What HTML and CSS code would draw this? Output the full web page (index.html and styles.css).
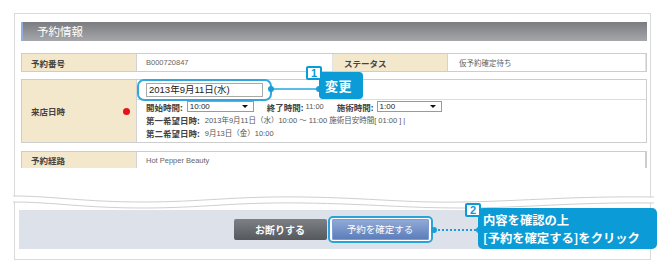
FILE: index.html
```html
<!DOCTYPE html>
<html lang="ja">
<head>
<meta charset="utf-8">
<title>予約情報</title>
<link rel="stylesheet" href="styles.css">
</head>
<body>
<div class="page">
  <div class="frame">
    <div class="hd">予約情報</div>

    <div class="row r1">
      <div class="lab">予約番号</div>
      <div class="val">B000720847</div>
      <div class="lab">ステータス</div>
      <div class="val">仮予約確定待ち</div>
    </div>

    <div class="row r2">
      <div class="lab lab-mid"><span>来店日時</span><span class="req"></span></div>
      <div class="val2">
        <div class="sub1"><div class="inp">2013年9月11日(水)</div></div>
        <div class="sub2">
          <div class="ln">
            <span class="k">開始時間:</span>
            <span class="sel sel-a">10:00<i class="arr"></i></span>
            <span class="k k-end">終了時間:</span><span class="v">11:00</span>
            <span class="k k-dur">施術時間:</span>
            <span class="sel sel-b">1:00<i class="arr"></i></span>
          </div>
          <div class="ln"><span class="k">第一希望日時:</span><span class="v v-gap">2013年9月11日（水）10:00 ～ 11:00 施術目安時間[ 01:00 ] |</span></div>
          <div class="ln"><span class="k">第二希望日時:</span><span class="v v-gap">9月13日（金）10:00</span></div>
        </div>
      </div>
    </div>

    <div class="row r3">
      <div class="lab">予約経路</div>
      <div class="val">Hot Pepper Beauty</div>
    </div>

    <svg class="wave" viewBox="0 0 641 16" preserveAspectRatio="none" aria-hidden="true">
      <path d="M0 2 C40 2 70 8 130 8 S220 2 290 3 S390 9 450 8 S560 2 641 3 L641 9 C560 8 510 14 450 14 S350 8 290 9 S190 14 130 14 S40 8 0 8 Z" fill="#fff"/>
      <path d="M0 2 C40 2 70 8 130 8 S220 2 290 3 S390 9 450 8 S560 2 641 3" fill="none" stroke="#cfcfcf" stroke-width="1"/>
      <path d="M0 8 C40 8 70 14 130 14 S220 8 290 9 S390 14 450 14 S560 8 641 9" fill="none" stroke="#cfcfcf" stroke-width="1"/>
    </svg>

    <div class="panel">
      <button class="btn btn-gray">お断りする</button>
      <span class="focus"><button class="btn btn-blue">予約を確定する</button></span>
    </div>
  </div>

  <!-- annotation 1 -->
  <div class="hl1"></div>
  <div class="link1"><i class="pt pt-l"></i><i class="pt pt-r"></i></div>
  <div class="tip1">変更</div>
  <div class="badge badge1">1</div>

  <!-- annotation 2 -->
  <div class="link2"><i class="pt pt-l"></i><i class="pt pt-r"></i></div>
  <div class="tip2"><span class="tl">内容を確認の上</span><span class="tl">[予約を確定する]をクリック</span></div>
  <div class="badge badge2">2</div>
</div>
</body>
</html>
```

FILE: styles.css
```css
* { box-sizing: border-box; }
html, body { margin: 0; padding: 0; background: #fff; }
body {
  font-family: "Noto Sans CJK JP", "Noto Sans", sans-serif;
  color: #333;
}
.page {
  position: relative;
  width: 670px;
  height: 270px;
  overflow: hidden;
  padding: 13px 0 0 14px;
}
.frame {
  width: 637px;
  height: 247px;
  border: 1px solid #d9d9d9;
  padding: 8px 3px 0 6px;
  display: flex;
  flex-direction: column;
}
.hd {
  height: 19px;
  background: linear-gradient(#7a7c80, #a5a7aa);
  border-left: 2px solid #8fb0de;
  color: #fff;
  font-size: 11.5px;
  line-height: 19px;
  padding-left: 14px;
}
.row {
  display: grid;
  border: 1px solid #cdcdcd;
  background: #fff;
}
.r1 {
  margin-top: 12px;
  height: 19px;
  grid-template-columns: 115px 196px 115px 1fr;
}
.r2 {
  margin-top: 7px;
  height: 64px;
  grid-template-columns: 115px 1fr;
}
.r3 {
  margin-top: 8px;
  height: 17px;
  border-bottom: 0;
  grid-template-columns: 115px 1fr;
}
.lab {
  background: #f3e8cc;
  border-right: 1px solid #d3d3d3;
  font-size: 8.5px;
  font-weight: bold;
  color: #444;
  padding-left: 9px;
  display: flex;
  align-items: center;
}
.r1 .lab:nth-child(3) { padding-left: 11px; }
.lab-mid {
  justify-content: space-between;
  padding-right: 6px;
}
.req {
  width: 7px;
  height: 7px;
  border-radius: 50%;
  background: #e3151a;
}
.val {
  font-family: "Liberation Sans", "Noto Sans CJK JP", sans-serif;
  font-size: 7.5px;
  color: #666;
  padding-left: 9px;
  display: flex;
  align-items: center;
  border-right: 1px solid #e2e2e2;
}
.r1 .val:last-child { padding-left: 11px; }
.val2 { display: flex; flex-direction: column; }
.sub1 {
  height: 20px;
  border-bottom: 1px solid #dcdcdc;
  padding: 3px 0 0 9px;
}
.inp {
  width: 117px;
  height: 14px;
  border: 1px solid #a9a9a9;
  font-family: "Liberation Sans", "Noto Sans CJK JP", sans-serif;
  font-size: 9.5px;
  line-height: 12px;
  padding-left: 2px;
  color: #222;
}
.sub2 { padding: 0 0 0 9px; }
.ln {
  height: 13px;
  display: flex;
  align-items: center;
  white-space: nowrap;
}
.k {
  font-size: 8.5px;
  font-weight: bold;
  color: #444;
}
.v {
  font-family: "Liberation Sans", "Noto Sans CJK JP", sans-serif;
  font-size: 7.5px;
  color: #555;
}
.v-gap { margin-left: 5px; }
.sel {
  position: relative;
  display: inline-block;
  height: 11px;
  border: 1px solid #9a9a9a;
  background: #fff;
  font-family: "Liberation Sans", sans-serif;
  font-size: 8px;
  line-height: 9px;
  padding-left: 2px;
  color: #222;
}
.sel-a { width: 67px; margin-left: 4px; }
.sel-b { width: 65px; margin-left: 3px; }
.arr {
  position: absolute;
  right: 5px;
  top: 3px;
  border-left: 3px solid transparent;
  border-right: 3px solid transparent;
  border-top: 3px solid #111;
}
.k-end { margin-left: 13px; margin-right: 2px; }
.k-dur { margin-left: 13px; }
.r3 .val { border-right: 1px solid #cdcdcd; }
.r3 .lab { border-right: 1px solid #d3d3d3; }

.wave {
  display: block;
  width: 641px;
  height: 16px;
  margin: 26px 0 0 -8px;
}
.panel {
  height: 39px;
  margin: 0 0 0 -2px;
  background: #dde1ea;
  display: flex;
  align-items: center;
  justify-content: center;
}
.btn {
  height: 21px;
  border: 0;
  padding: 0;
  font-family: "Noto Sans CJK JP", sans-serif;
  color: #fff;
  line-height: 21px;
  cursor: pointer;
}
.btn-gray {
  width: 93px;
  font-size: 10px;
  font-weight: bold;
  background: linear-gradient(#7d8085, #55585d);
  border-radius: 2px;
  margin-right: 1px;
}
.focus {
  display: inline-block;
  border: 2px solid #29a3da;
  border-radius: 5px;
  padding: 1px 2px;
  background: #fff;
}
.btn-blue {
  display: block;
  width: 97px;
  font-size: 9.5px;
  background: linear-gradient(#93acd9, #5a7bb8);
  border-radius: 2px;
  box-shadow: inset 0 0 0 1px #7f9bd0;
}

/* annotations */
.hl1 {
  position: absolute;
  left: 137px;
  top: 79px;
  width: 135px;
  height: 22px;
  border: 2px solid #33a7dc;
  border-radius: 7px;
}
.link1, .link2 {
  position: absolute;
  height: 2px;
}
.link1 {
  left: 270px;
  top: 88px;
  width: 50px;
  background: #5cbce8;
}
.link2 {
  left: 433px;
  top: 229px;
  width: 47px;
  height: 0;
  border-top: 2px dotted #1c9dd8;
}
.pt {
  position: absolute;
  width: 6px;
  height: 6px;
  border-radius: 50%;
  background: #1c9dd8;
  top: -2px;
}
.link2 .pt { top: -4px; }
.pt-l { left: -2px; }
.pt-r { right: -2px; }
.tip1 {
  position: absolute;
  left: 319px;
  top: 72px;
  width: 44px;
  height: 27px;
  background: #0b9bd6;
  border-radius: 4px;
  color: #fff;
  font-size: 13px;
  font-weight: bold;
  line-height: 27px;
  padding-left: 6px;
  letter-spacing: 0.5px;
}
.tip2 {
  position: absolute;
  left: 478px;
  top: 208px;
  width: 179px;
  height: 41px;
  background: #0b9bd6;
  border-radius: 5px;
  color: #fff;
  font-size: 12.3px;
  font-weight: bold;
  padding: 3px 0 0 5px;
  white-space: nowrap;
  display: flex;
  flex-direction: column;
}
.tl {
  display: block;
  height: 18px;
  line-height: 18px;
}
.badge {
  position: absolute;
  width: 16px;
  height: 14px;
  background: #fff;
  border: 2px solid #0b9bd6;
  border-radius: 2px;
  color: #0b9bd6;
  font-family: "Liberation Sans", sans-serif;
  font-size: 11px;
  font-weight: bold;
  line-height: 10px;
  text-align: center;
}
.badge1 { left: 306px; top: 66px; }
.badge2 { left: 465px; top: 203px; }
```
